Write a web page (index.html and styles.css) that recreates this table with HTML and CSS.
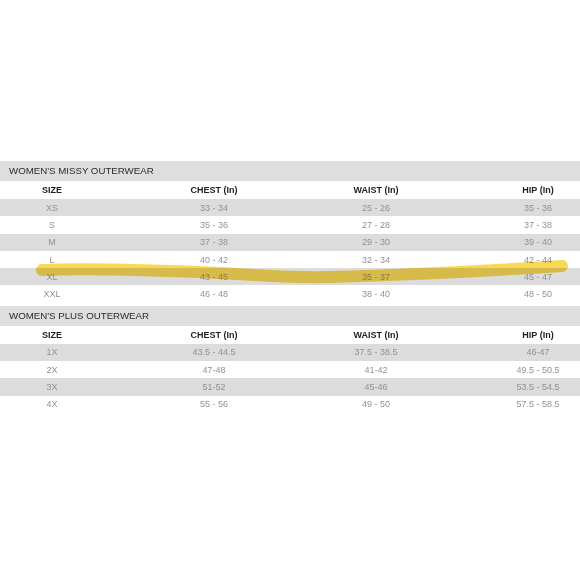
FILE: index.html
```html
<!DOCTYPE html>
<html>
<head>
<meta charset="utf-8">
<link rel="stylesheet" href="styles.css">
</head>
<body>
<div class="chart">
  <section class="block">
    <div class="title">WOMEN'S MISSY OUTERWEAR</div>
    <div class="row head"><span>SIZE</span><span>CHEST (In)</span><span>WAIST (In)</span><span>HIP (In)</span></div>
    <div class="row shade"><span>XS</span><span>33 - 34</span><span>25 - 26</span><span>35 - 36</span></div>
    <div class="row"><span>S</span><span>35 - 36</span><span>27 - 28</span><span>37 - 38</span></div>
    <div class="row shade"><span>M</span><span>37 - 38</span><span>29 - 30</span><span>39 - 40</span></div>
    <div class="row"><span>L</span><span>40 - 42</span><span>32 - 34</span><span>42 - 44</span></div>
    <div class="row shade"><span>XL</span><span>43 - 45</span><span>35 - 37</span><span>45 - 47</span></div>
    <div class="row"><span>XXL</span><span>46 - 48</span><span>38 - 40</span><span>48 - 50</span></div>
  </section>
  <section class="block">
    <div class="title">WOMEN'S PLUS OUTERWEAR</div>
    <div class="row head"><span>SIZE</span><span>CHEST (In)</span><span>WAIST (In)</span><span>HIP (In)</span></div>
    <div class="row shade"><span>1X</span><span>43.5 - 44.5</span><span>37.5 - 38.5</span><span>46-47</span></div>
    <div class="row"><span>2X</span><span>47-48</span><span>41-42</span><span>49.5 - 50.5</span></div>
    <div class="row shade"><span>3X</span><span>51-52</span><span>45-46</span><span>53.5 - 54.5</span></div>
    <div class="row"><span>4X</span><span>55 - 56</span><span>49 - 50</span><span>57.5 - 58.5</span></div>
  </section>
</div>
<svg class="marker" width="580" height="580" viewBox="0 0 580 580">
  <path d="M42 270 C 90 268, 150 270, 220 273 C 260 275, 290 278, 330 277 C 400 275, 470 272, 562 266" fill="none" stroke="#f6d02c" stroke-width="12" stroke-linecap="round" opacity="0.8"/>
</svg>
</body>
</html>
```
FILE: styles.css
```css
html, body {
  margin: 0;
  padding: 0;
  background: #ffffff;
}
body {
  width: 580px;
  height: 580px;
  position: relative;
  overflow: hidden;
  font-family: "Liberation Sans", Arial, sans-serif;
}
.chart {
  padding-top: 161px;
  display: flex;
  flex-direction: column;
  gap: 3px;
}
.title {
  background: #dedede;
  color: #2b2b2b;
  font-size: 9.7px;
  height: 20px;
  line-height: 20px;
  padding-left: 9px;
}
.row {
  display: grid;
  grid-template-columns: repeat(4, 80px);
  column-gap: 82px;
  padding-left: 12px;
  height: 17.3px;
  align-items: center;
  font-size: 9px;
  color: #929292;
}
.row span {
  text-align: center;
  white-space: nowrap;
}
.row.head {
  height: 18px;
  font-weight: bold;
  color: #1e1e1e;
}
.row.shade {
  background: #dcdcdc;
}
.marker {
  position: absolute;
  left: 0;
  top: 0;
  pointer-events: none;
  mix-blend-mode: multiply;
}
```
